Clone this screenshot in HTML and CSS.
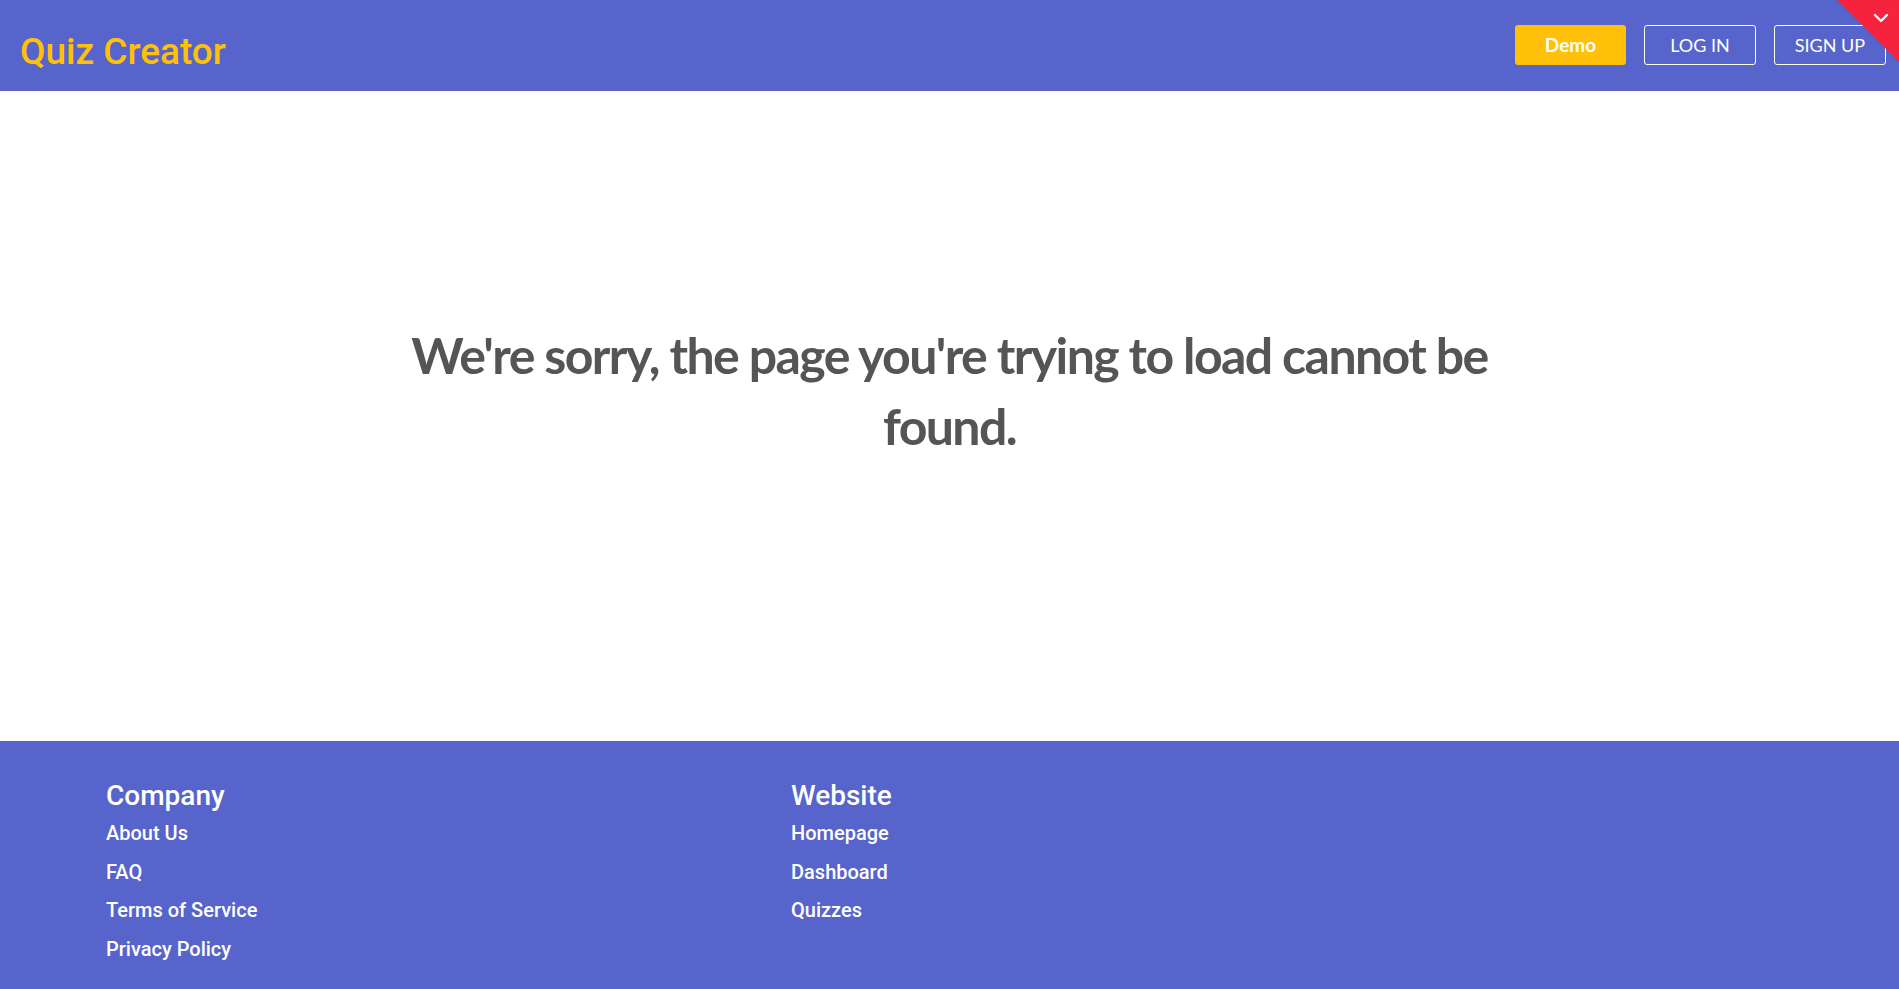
FILE: index.html
```html
<!DOCTYPE html>
<html lang="en">
<head>
  <meta charset="UTF-8" />
  <meta name="viewport" content="width=device-width, initial-scale=1.0"/>
  <title>Quiz Creator - Page not found</title>
  <link rel="stylesheet" href="styles.css">
</head>
<body>
  <header class="navbar">
    <a class="brand" href="#">Quiz Creator</a>
    <nav class="nav-actions">
      <a class="btn btn-demo" href="#">Demo</a>
      <a class="btn btn-outline" href="#">LOG IN</a>
      <a class="btn btn-outline" href="#">SIGN UP</a>
    </nav>
    <a class="corner" href="#" aria-label="Toggle">
      <svg width="16" height="10" viewBox="0 0 16 10">
        <path d="M2 2 L8 8 L14 2" fill="none" stroke="#fff" stroke-width="2.4" stroke-linecap="round" stroke-linejoin="round"/>
      </svg>
    </a>
  </header>

  <main class="not-found">
    <h2>We're sorry, the page you're trying to load cannot be found.</h2>
  </main>

  <footer class="footer">
    <div class="footer-col">
      <h3>Company</h3>
      <a href="#">About Us</a>
      <a href="#">FAQ</a>
      <a href="#">Terms of Service</a>
      <a href="#">Privacy Policy</a>
    </div>
    <div class="footer-col">
      <h3>Website</h3>
      <a href="#">Homepage</a>
      <a href="#">Dashboard</a>
      <a href="#">Quizzes</a>
    </div>
  </footer>
</body>
</html>
```

FILE: styles.css
```css
* {
  box-sizing: border-box;
}

body {
  margin: 0;
  font-family: 'Roboto', sans-serif;
  background: #fff;
}

a {
  text-decoration: none;
}

.navbar {
  position: relative;
  height: 91px;
  background: #5664cc;
  display: flex;
  align-items: center;
  justify-content: space-between;
  padding: 0 13px 0 20px;
  overflow: hidden;
}

.brand {
  color: #ffc107;
  font-family: 'Roboto', sans-serif;
  font-weight: 500;
  font-size: 37px;
  margin-top: 11px;
}

.nav-actions {
  display: flex;
  gap: 18px;
  margin-top: -2px;
}

.btn {
  display: flex;
  align-items: center;
  justify-content: center;
  width: 112px;
  height: 40px;
  border-radius: 3px;
  font-family: 'Lato', sans-serif;
  font-size: 18px;
  color: #fff;
}

.btn-demo {
  width: 111px;
  background: #ffc107;
  font-weight: 700;
  font-size: 19px;
}

.btn-outline {
  border: 1px solid #fff;
}

.corner {
  position: absolute;
  top: 0;
  right: 0;
  width: 62px;
  height: 62px;
  background: #f6233f;
  clip-path: polygon(0 0, 100% 0, 100% 100%);
}

.corner svg {
  position: absolute;
  top: 13px;
  right: 10px;
}

.not-found {
  height: 650px;
  display: flex;
  justify-content: center;
  padding-top: 229px;
}

.not-found h2 {
  margin: 0;
  width: 1100px;
  text-align: center;
  font-family: 'Lato', sans-serif;
  font-weight: 700;
  font-size: 50px;
  letter-spacing: -1.6px;
  line-height: 71px;
  color: #555;
}

.footer {
  background: #5664cc;
  min-height: 248px;
  display: grid;
  grid-template-columns: 685px 685px;
  padding: 38px 106px 20px;
}

.footer-col {
  display: flex;
  flex-direction: column;
  align-items: flex-start;
}

.footer-col h3 {
  margin: 0 0 1px;
  color: #fff;
  font-weight: 500;
  font-size: 28px;
  line-height: 34px;
}

.footer-col a {
  color: #fff;
  font-weight: 500;
  font-size: 20px;
  line-height: 38.5px;
}
```
